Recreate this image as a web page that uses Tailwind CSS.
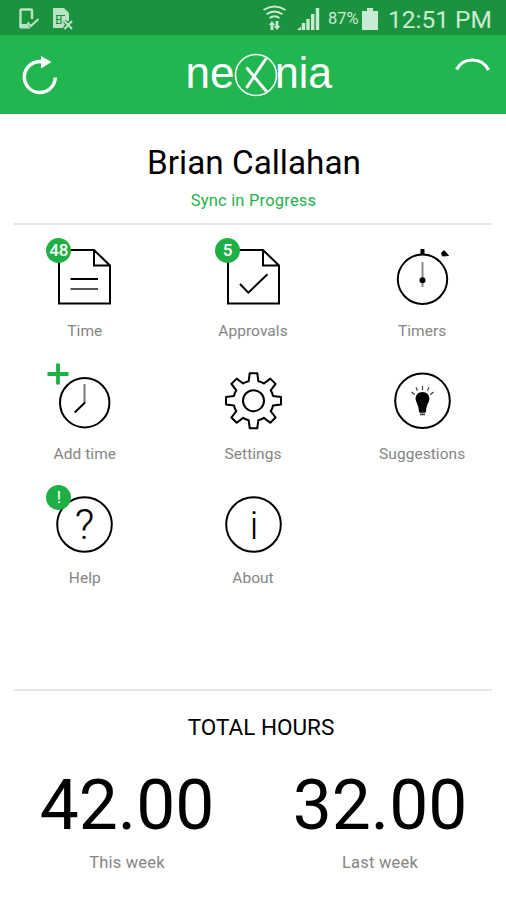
<!DOCTYPE html>
<html lang="en">
<head>
  <meta charset="UTF-8">
  <meta name="viewport" content="width=device-width, initial-scale=1.0">
  <title>Nexonia</title>
  <script src="https://cdn.jsdelivr.net/npm/@tailwindcss/browser@4"></script>
</head>
<body class="bg-white font-[Roboto,sans-serif] text-black">
  <div class="w-[506px] h-[900px] flex flex-col overflow-hidden">

    <!-- Status bar -->
    <div class="h-[35px] shrink-0 bg-[#1b933e] flex items-center text-[#c9ebd2] pl-[18px] pr-[14px]">
      <svg class="w-[56px] h-[35px]" viewBox="18 0 56 35" fill="none" stroke="#b9e3c4">
        <path d="M20.500 27V10.500q0-1 1-1h9.500q1 0 1 1V19" stroke-width="2.400"/>
        <path d="M19.500 24h8l3 4.500h-10q-1 0-1-1z" fill="#b9e3c4" stroke="none"/>
        <path d="M27.500 22.500l3.500 3.500 7.500-7" stroke-width="2"/>
        <path d="M53 8h11l5 5v8l-3 1-3 6H53z" fill="#b9e3c4" stroke="none"/>
        <path d="M56 15.500h9M56 19.500h5M56 23.500h4M57 15v9M61 15v9" stroke="#1b933e" stroke-width="1.200"/>
        <path d="M64.500 21l7.500 8M72 21l-7.500 8" stroke="#1b933e" stroke-width="4"/>
        <path d="M64.500 21l7.500 8M72 21l-7.500 8" stroke-width="2"/>
      </svg>
      <svg class="w-[62px] h-[35px] ml-auto mr-[5px]" viewBox="261 0 62 35" fill="none" stroke="#c9ebd2" stroke-width="2">
        <path d="M263.500 10q11-7 22 0M266.500 14.200q8-5.500 16 0M269.500 18q5-3.400 10 0"/>
        <path d="M272 30v-7M277 21v7" stroke-width="2.800"/>
        <path d="M268.800 25l3.200-4 3.200 4zM273.800 26l3.200 4 3.200-4z" fill="#c9ebd2" stroke="none"/>
        <path d="M297 30l4-3.500V30z" fill="#c9ebd2" stroke="none"/>
        <path d="M303.500 30v-7M308 30V19M312.700 30V14M317.500 30V8" stroke-width="3.400"/>
      </svg>
      <span class="text-[16.500px] leading-none mt-[4px] w-[32px]">87%</span>
      <svg class="w-[16px] h-[22px] ml-[2px] mr-[10px] mt-[2px]" viewBox="0 0 16 22">
        <path d="M5 0h6v3h5v19H0V3h5z" fill="#c9ebd2"/>
      </svg>
      <span class="text-[24.500px] leading-none mt-[5px] w-[104px] whitespace-nowrap">12:51 PM</span>
    </div>

    <!-- Header -->
    <div class="h-[79px] shrink-0 bg-[#22b650] flex items-center justify-between">
      <svg class="w-[80px] h-[79px]" viewBox="0 35 80 79" fill="none" stroke="white" stroke-width="3.400">
        <path d="M42 61.700A15.500 15.500 0 1 0 55.300 77.500"/>
        <path d="M41 56l10.500 6L41 68.500z" fill="white" stroke="none"/>
      </svg>
      <svg class="w-[180px] h-[79px]" viewBox="163 35 180 79" fill="none" stroke="white">
        <text x="185.500" y="87.500" font-family="Liberation Sans, sans-serif" font-size="45" fill="white" stroke="none" textLength="49" lengthAdjust="spacingAndGlyphs">ne</text>
        <circle cx="256" cy="75" r="20.500" stroke-width="1.600"/>
        <path d="M266 58.500L246.500 88" stroke-width="3"/>
        <path d="M246.500 67.500L266.500 91.500" stroke-width="3"/>
        <text x="275" y="87.500" font-family="Liberation Sans, sans-serif" font-size="45" fill="white" stroke="none" textLength="57" lengthAdjust="spacingAndGlyphs">nia</text>
      </svg>
      <svg class="w-[80px] h-[79px]" viewBox="426 35 80 79" fill="none" stroke="white" stroke-width="3.200">
        <path d="M456.500 69.500A18 18 0 0 1 488.500 70"/>
      </svg>
    </div>

    <!-- User -->
    <div class="h-[111px] shrink-0 mx-[14px] border-b-2 border-[#e6e6e6] flex flex-col items-center">
      <div class="mt-[29px] pl-[2px] text-[33.300px] leading-[40px]">Brian Callahan</div>
      <div class="mt-[8px] text-[16.500px] leading-[20px] tracking-[0.200px] pl-px text-[#22b24c]">Sync in Progress</div>
    </div>

    <!-- Menu -->
    <div class="h-[464px] shrink-0 pt-[16px] grid grid-cols-3 auto-rows-[124px] content-start text-[15.500px] text-[#858585] tracking-[0.050px]">
      <div class="flex flex-col items-center">
        <div class="relative">
          <svg class="w-[72px] h-[72px]" viewBox="0 0 72 72" fill="none" stroke="black" stroke-width="2">
            <path d="M46 9H11v53.500h51V24.500zV24.500h16"/>
            <path d="M22.500 38H50"/>
            <path d="M22.500 48H50" stroke="#555"/>
          </svg>
          <span class="absolute -left-[2px] -top-[3px] size-[25px] rounded-full bg-[#1fb045] text-white text-[17px] font-medium tracking-normal flex items-center justify-center">48</span>
        </div>
        <span class="mt-[8px] leading-[20px] pl-px">Time</span>
      </div>
      <div class="flex flex-col items-center">
        <div class="relative">
          <svg class="w-[72px] h-[72px]" viewBox="0 0 72 72" fill="none" stroke="black" stroke-width="2">
            <path d="M46 9H11v53.500h51V24.500zV24.500h16"/>
            <path d="M23 43l8.300 8.700L50.500 33.300"/>
          </svg>
          <span class="absolute -left-[2px] -top-[3px] size-[25px] rounded-full bg-[#1fb045] text-white text-[17px] font-medium tracking-normal flex items-center justify-center">5</span>
        </div>
        <span class="mt-[8px] leading-[20px]">Approvals</span>
      </div>
      <div class="flex flex-col items-center">
        <svg class="w-[72px] h-[72px]" viewBox="0 0 72 72" fill="none" stroke="black" stroke-width="2">
          <circle cx="36.500" cy="38.300" r="24.700"/>
          <path d="M36.500 8v6" stroke-width="4"/>
          <path d="M55.500 12l2.500-2.500 4.500 5-6 .5z" fill="black" stroke-width="1"/>
          <path d="M36.500 21v25" stroke="#888"/>
          <circle cx="36.500" cy="39.300" r="3" fill="black" stroke="none"/>
        </svg>
        <span class="mt-[8px] leading-[20px] pl-px">Timers</span>
      </div>

      <div class="flex flex-col items-center">
        <svg class="w-[72px] h-[72px] overflow-visible" viewBox="0 0 72 72" fill="none" stroke="black" stroke-width="2">
          <circle cx="36.700" cy="37.700" r="24.700"/>
          <path d="M36.500 19v19" stroke="#777"/>
          <path d="M37 37.500L26.700 47.500"/>
          <path d="M10 -1.500v21M-.5 9h21" stroke="#1fb045" stroke-width="3.800"/>
        </svg>
        <span class="mt-[7px] leading-[20px] pl-px">Add time</span>
      </div>
      <div class="flex flex-col items-center">
        <svg class="w-[72px] h-[72px]" viewBox="0 0 72 72" fill="none" stroke="black" stroke-width="2">
          <g transform="translate(36.500 35.700)">
            <path stroke-linejoin="round" d="M-4.800-19.500L-3.800-27.500H3.800L4.800-19.500Q8-19 10.400-17.200L16.800-22.100L22.100-16.800L17.200-10.400Q19-8 19.500-4.800L27.500-3.800V3.800L19.500 4.800Q19 8 17.200 10.400L22.100 16.800L16.800 22.100L10.400 17.200Q8 19 4.800 19.500L3.800 27.500H-3.800L-4.800 19.500Q-8 19-10.400 17.200L-16.800 22.100L-22.100 16.800L-17.200 10.400Q-19 8-19.500 4.800L-27.500 3.800V-3.800L-19.500-4.800Q-19-8-17.200-10.400L-22.100-16.800L-16.800-22.100L-10.400-17.200Q-8-19-4.800-19.500z"/>
            <circle r="10.500"/>
          </g>
        </svg>
        <span class="mt-[7px] leading-[20px]">Settings</span>
      </div>
      <div class="flex flex-col items-center">
        <svg class="w-[72px] h-[72px]" viewBox="0 0 72 72" fill="none" stroke="black" stroke-width="2">
          <circle cx="36.500" cy="35.700" r="27.300"/>
          <path d="M36.500 27c4 0 6.900 2.800 6.900 6.500 0 4-3.200 6-3.400 13.500h-7c-.2-7.500-3.400-9.500-3.400-13.500 0-3.700 2.900-6.500 6.900-6.500z" fill="black" stroke="none"/>
          <path d="M33.500 47.500h6M34 49.500h5" stroke="#444" stroke-width="1.500"/>
          <path d="M36.500 21v4M30 22.200l1.500 3.500M43 22.200l-1.500 3.500M25.500 27l3.200 2.800M47.500 27l-3.200 2.800" stroke="#444" stroke-width="1.200"/>
        </svg>
        <span class="mt-[7px] leading-[20px] pl-px">Suggestions</span>
      </div>

      <div class="flex flex-col items-center">
        <div class="relative">
          <svg class="w-[72px] h-[72px]" viewBox="0 0 72 72" fill="none" stroke="black" stroke-width="2">
            <circle cx="36.500" cy="35.500" r="27.300"/>
            <text x="36.500" y="50" text-anchor="middle" font-size="43" font-weight="300" letter-spacing="0" fill="black" stroke="none">?</text>
          </svg>
          <span class="absolute -left-[2px] -top-[4px] size-[25px] rounded-full bg-[#1fb045] text-white text-[17px] tracking-normal flex items-center justify-center">!</span>
        </div>
        <span class="mt-[7px] leading-[20px] pl-px">Help</span>
      </div>
      <div class="flex flex-col items-center">
        <svg class="w-[72px] h-[72px]" viewBox="0 0 72 72" fill="none" stroke="black" stroke-width="2">
          <circle cx="36.500" cy="35.500" r="27.300"/>
          <text x="37" y="50" text-anchor="middle" font-size="38" font-weight="300" letter-spacing="0" fill="black" stroke="none">i</text>
        </svg>
        <span class="mt-[7px] leading-[20px]">About</span>
      </div>
    </div>

    <!-- Totals -->
    <div class="mx-[14px] border-t-2 border-[#e6e6e6] text-center">
      <div class="mt-[23px] pl-[16px] text-[22.500px] leading-[26px]">TOTAL HOURS</div>
    </div>
    <div class="grid grid-cols-2 text-center">
      <div>
        <div class="mt-[25px] pl-px text-[69.500px] leading-[82px]">42.00</div>
        <div class="mt-[6px] text-[16.500px] leading-[20px] tracking-[0.200px] pl-px text-[#858585]">This week</div>
      </div>
      <div>
        <div class="mt-[25px] pl-px text-[69.500px] leading-[82px]">32.00</div>
        <div class="mt-[6px] text-[16.500px] leading-[20px] tracking-[0.200px] pl-px text-[#858585]">Last week</div>
      </div>
    </div>
  </div>
</body>
</html>
